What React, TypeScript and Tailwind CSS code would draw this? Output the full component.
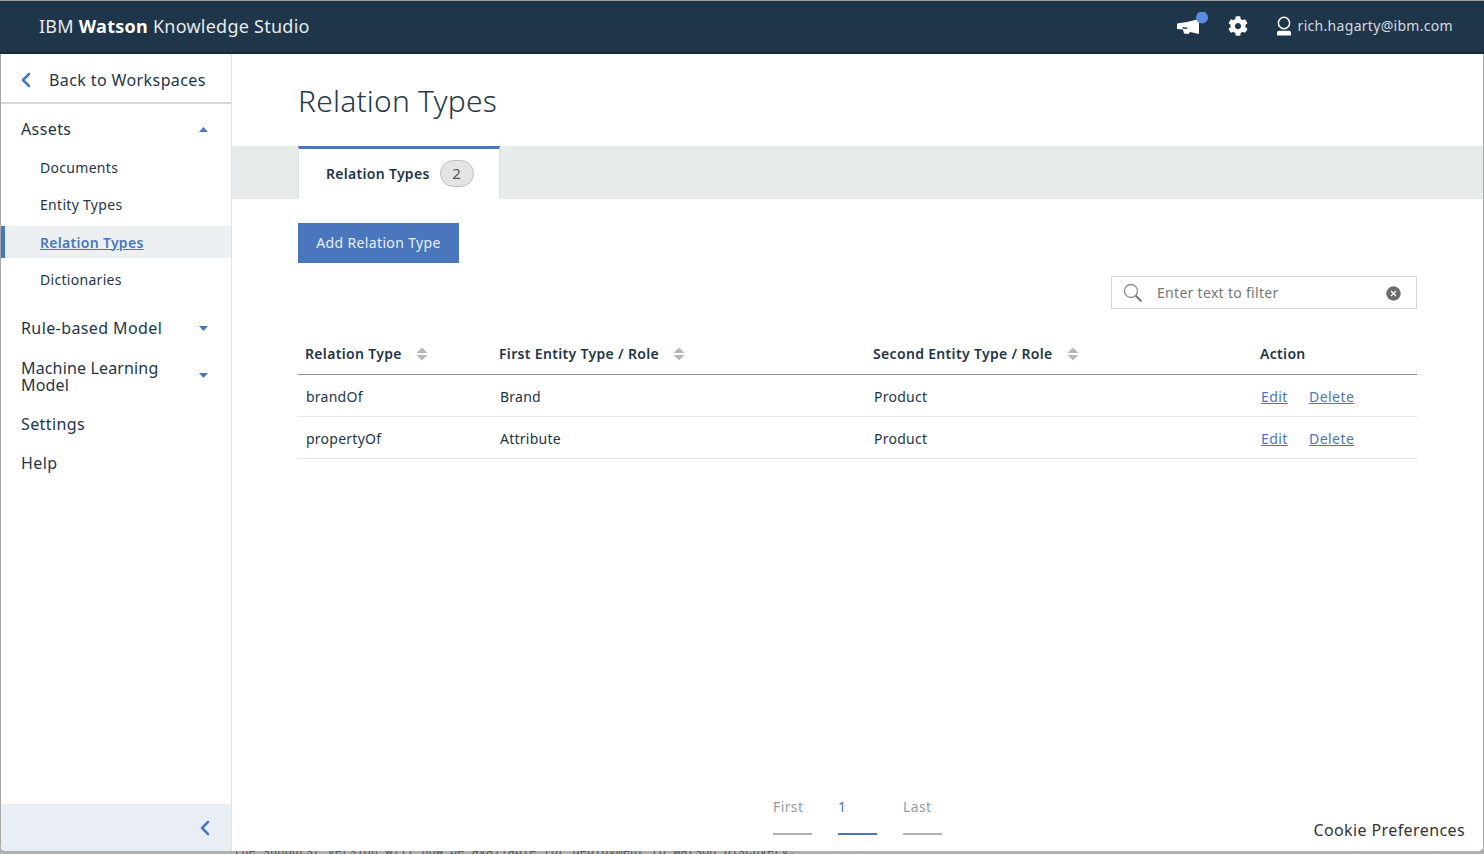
import { ChevronLeft } from "lucide-react";

const font = { fontFamily: '"Noto Sans", sans-serif' };

function SortIcon() {
  return (
    <svg width="12" height="14" viewBox="0 0 12 14" className="shrink-0">
      <path d="M6 0.5 L11.5 6 H0.5 Z" fill="#b4b8ba" />
      <path d="M0.5 8 H11.5 L6 13.5 Z" fill="#b4b8ba" />
    </svg>
  );
}

function Caret({ up }: { up?: boolean }) {
  return (
    <svg width="9" height="5" viewBox="0 0 9 5" className="shrink-0">
      <path d={up ? "M4.5 0 L9 5 H0 Z" : "M0 0 H9 L4.5 5 Z"} fill="#4a76bd" />
    </svg>
  );
}

function Megaphone() {
  return (
    <svg width="32" height="28" viewBox="0 0 32 28">
      <path d="M1 11.5 L11 10 L23 7 V22 L14 20 L12.5 22 L8 21.5 L7 17.5 L1 17 Z" fill="#fff" />
      <path d="M6.5 15 L11.5 15.7 L11.2 17.1 L6.5 16.5 Z" fill="#1f3549" />
      <circle cx="26" cy="5.5" r="6" fill="#5a8de0" />
    </svg>
  );
}

function Gear() {
  return (
    <svg width="20" height="20" viewBox="0 0 512 512">
      <path
        fill="#fff"
        d="M487.4 315.7l-42.6-24.6c4.3-23.2 4.3-47 0-70.2l42.6-24.6c4.9-2.8 7.1-8.6 5.5-14-11.1-35.6-30-67.8-54.7-94.6-3.8-4.1-10-5.1-14.8-2.3L380.8 110c-17.9-15.4-38.5-27.3-60.8-35.1V25.8c0-5.6-3.9-10.5-9.4-11.7-36.7-8.2-74.3-7.8-109.2 0-5.5 1.2-9.4 6.1-9.4 11.7V75c-22.2 7.9-42.8 19.8-60.8 35.1L88.7 85.5c-4.9-2.8-11-1.9-14.8 2.3-24.7 26.7-43.6 58.9-54.7 94.6-1.7 5.4.6 11.2 5.5 14L67.3 221c-4.3 23.2-4.3 47 0 70.2l-42.6 24.6c-4.9 2.8-7.1 8.6-5.5 14 11.1 35.6 30 67.8 54.7 94.6 3.8 4.1 10 5.1 14.8 2.3l42.6-24.6c17.9 15.4 38.5 27.3 60.8 35.1v49.2c0 5.6 3.9 10.5 9.4 11.7 36.7 8.2 74.3 7.8 109.2 0 5.5-1.2 9.4-6.1 9.4-11.7v-49.2c22.2-7.9 42.8-19.8 60.8-35.1l42.6 24.6c4.9 2.8 11 1.9 14.8-2.3 24.7-26.7 43.6-58.9 54.7-94.6 1.5-5.5-.7-11.3-5.6-14.1zM256 336c-44.1 0-80-35.9-80-80s35.9-80 80-80 80 35.9 80 80-35.9 80-80 80z"
      />
    </svg>
  );
}

function UserIcon() {
  return (
    <svg width="16" height="20" viewBox="0 0 16 20" fill="none">
      <ellipse cx="8" cy="7" rx="5.6" ry="5.8" stroke="#fff" strokeWidth="1.5" />
      <path d="M1 19.5 V16.8 C1 15.6 2 14.8 3.2 14.8 H12.8 C14 14.8 15 15.6 15 16.8 V19.5 Z" fill="#fff" />
    </svg>
  );
}

function SubItem({ label, active }: { label: string; active?: boolean }) {
  if (active) {
    return (
      <div className="flex h-[32px] items-center border-l-[4px] border-[#4a76bd] bg-[#edf0f3] pl-[35px] text-[14px] font-semibold tracking-[0.3px] text-[#4a76bd] underline">
        {label}
      </div>
    );
  }
  return <div className="flex h-[32px] items-center pl-[39px] text-[14px] tracking-[0.3px] text-[#1f3549]">{label}</div>;
}

function PagerItem({ label, active }: { label: string; active?: boolean }) {
  return (
    <div className="flex w-[39px] flex-col">
      <span className={`h-[36px] w-full text-[14px] leading-[20px] tracking-[0.4px] ${active ? "text-[#4a76bd]" : "text-[#959ca3]"}`}>
        {label}
      </span>
      <div className={`h-[2px] w-full ${active ? "bg-[#4a76bd]" : "bg-[#b0b0b0]"}`} />
    </div>
  );
}

const rows = [
  { name: "brandOf", first: "Brand", second: "Product" },
  { name: "propertyOf", first: "Attribute", second: "Product" },
];

export default function App() {
  return (
    <div style={font} className="relative flex h-[854px] w-[1484px] flex-col overflow-hidden bg-[#b0b0b0] text-[#1f3549]">
      <div className="flex h-[851px] shrink-0 flex-col overflow-hidden rounded-b-[6px] bg-white">
        <header className="flex h-[54px] shrink-0 items-center justify-between border-t border-t-[#9b9b9b] border-b-2 border-b-[#16293a] bg-[#1f3549] pb-[1px] pl-[39px] pr-[31px]">
          <div className="text-[18px] tracking-[0.25px] text-[#e6eaee]">
            IBM <span className="font-bold text-white">Watson</span> Knowledge Studio
          </div>
          <div className="flex items-center">
            <Megaphone />
            <div className="ml-[20px]">
              <Gear />
            </div>
            <div className="ml-[28px]">
              <UserIcon />
            </div>
            <span className="ml-[6px] -translate-y-[1px] text-[14px] tracking-[0.3px] text-[#d5dbe0]">rich.hagarty@ibm.com</span>
          </div>
        </header>

        <div className="flex min-h-0 flex-1 border-x border-[#a8a8a8]">
          <aside className="flex w-[231px] shrink-0 flex-col border-r border-[#dfe2e5]">
            <div className="flex h-[50px] shrink-0 items-center border-b-2 border-[#d4d6d8] pl-[13px] pt-[3px] text-[16px] tracking-[0.4px]">
              <ChevronLeft size={24} strokeWidth={2.5} className="text-[#4a76bd]" />
              <span className="ml-[11px]">Back to Workspaces</span>
            </div>
            <div className="flex-1">
              <div className="mt-[6px] flex h-[38px] items-center justify-between pl-[20px] pr-[23px] text-[16px] tracking-[0.4px]">
                <span>Assets</span>
                <Caret up />
              </div>
              <div className="mt-[3px]">
                <SubItem label="Documents" />
              </div>
              <div className="mt-[5px]">
                <SubItem label="Entity Types" />
              </div>
              <div className="mt-[6px]">
                <SubItem label="Relation Types" active />
              </div>
              <div className="mt-[5px]">
                <SubItem label="Dictionaries" />
              </div>
              <div className="mt-[14px] flex h-[38px] items-center justify-between pl-[20px] pr-[23px] text-[16px] tracking-[0.4px]">
                <span>Rule-based Model</span>
                <Caret />
              </div>
              <div className="mt-[11px] flex h-[38px] items-center justify-between pl-[20px] pr-[23px] text-[16px] leading-[17px] tracking-[0.15px]">
                <span className="w-[160px]">Machine Learning Model</span>
                <div className="-translate-y-[2px]">
                  <Caret />
                </div>
              </div>
              <div className="mt-[9px] flex h-[38px] items-center pl-[20px] text-[16px] tracking-[0.4px]">Settings</div>
              <div className="mt-[1px] flex h-[38px] items-center pl-[20px] text-[16px] tracking-[0.4px]">Help</div>
            </div>
            <div className="flex h-[47px] shrink-0 items-center justify-end bg-[#e9eef5] pr-[14px]">
              <ChevronLeft size={24} strokeWidth={2.5} className="text-[#4a76bd]" />
            </div>
          </aside>

          <main className="flex min-w-0 flex-1 flex-col">
            <h1 className="ml-[66px] mt-[26px] h-[66px] text-[30px] font-light leading-[42px] tracking-[0.2px] text-[#26384a]">Relation Types</h1>
            <div className="flex h-[53px] shrink-0 bg-[#e8ebeb] pl-[66px]">
              <div className="flex h-[53px] w-[202px] items-center border-x border-t-[3px] border-x-[#dcdfe1] border-t-[#4a76bd] bg-white pb-[2px] pl-[27px]">
                <span className="text-[14px] font-semibold tracking-[0.3px]">Relation Types</span>
                <span className="ml-[10px] flex h-[27px] w-[34px] items-center justify-center rounded-full border border-[#bdbdbd] bg-[#e4e4e4] text-[15px] text-[#555]">
                  2
                </span>
              </div>
            </div>

            <div className="flex flex-1 flex-col pl-[66px] pr-[66px]">
              <button className="mt-[24px] h-[40px] w-[161px] bg-[#4a76bd] pb-[2px] text-[14px] tracking-[0.35px] text-[#e9eff8]">Add Relation Type</button>

              <div className="mt-[13px] flex justify-end">
                <div className="flex h-[33px] w-[306px] items-center border border-[#d8d8d8] pl-[11px] pr-[15px]">
                  <svg width="20" height="20" viewBox="0 0 20 20" fill="none" className="shrink-0">
                    <circle cx="8" cy="8" r="6.5" stroke="#8a8a8a" strokeWidth="1.3" />
                    <path d="M12.8 12.8 L18.5 18.5" stroke="#777" strokeWidth="2" />
                  </svg>
                  <span className="ml-[14px] flex-1 text-[14px] tracking-[0.3px] text-[#777]">Enter text to filter</span>
                  <svg width="15" height="15" viewBox="0 0 15 15" className="mt-[2px] shrink-0">
                    <circle cx="7.5" cy="7.5" r="7.2" fill="#6c6c6c" />
                    <path d="M5 5 L10 10 M10 5 L5 10" stroke="#fff" strokeWidth="1.3" />
                  </svg>
                </div>
              </div>

              <div className="mt-[24px]">
                <div className="flex h-[42px] items-center border-b border-[#8c8f92] text-[14px] font-semibold tracking-[0.33px]">
                  <div className="flex w-[194px] items-center gap-[14px] pl-[7px]">
                    Relation Type <SortIcon />
                  </div>
                  <div className="flex w-[374px] items-center gap-[14px] pl-[7px]">
                    First Entity Type / Role <SortIcon />
                  </div>
                  <div className="flex w-[387px] items-center gap-[14px] pl-[7px]">
                    Second Entity Type / Role <SortIcon />
                  </div>
                  <div className="pl-[7px]">Action</div>
                </div>
                {rows.map((row) => (
                  <div key={row.name} className="flex h-[42px] items-center border-b border-[#e2e4e6] pt-[1px] text-[14px] tracking-[0.25px]">
                    <div className="w-[194px] pl-[8px]">{row.name}</div>
                    <div className="w-[374px] pl-[8px]">{row.first}</div>
                    <div className="w-[387px] pl-[8px]">{row.second}</div>
                    <div className="flex pl-[8px] tracking-[0.45px] text-[#4a76bd] underline">
                      <span className="w-[48px]">Edit</span>
                      <span>Delete</span>
                    </div>
                  </div>
                ))}
              </div>

              <div className="mt-auto flex h-[54px] shrink-0 items-start justify-center">
                <div className="flex gap-[26px]">
                  <PagerItem label="First" />
                  <PagerItem label="1" active />
                  <PagerItem label="Last" />
                </div>
              </div>
            </div>
          </main>
        </div>
      </div>
      <div className="h-[3px] overflow-hidden pl-[234px] font-['Liberation_Mono',monospace] text-[12px] leading-[3px] text-[#555]">
        the sunburst version will now be available for deployment to Watson Discovery.
      </div>
      <div className="absolute right-[19px] top-[818px] text-[16px] tracking-[0.4px] text-[#333]">Cookie Preferences</div>
    </div>
  );
}
